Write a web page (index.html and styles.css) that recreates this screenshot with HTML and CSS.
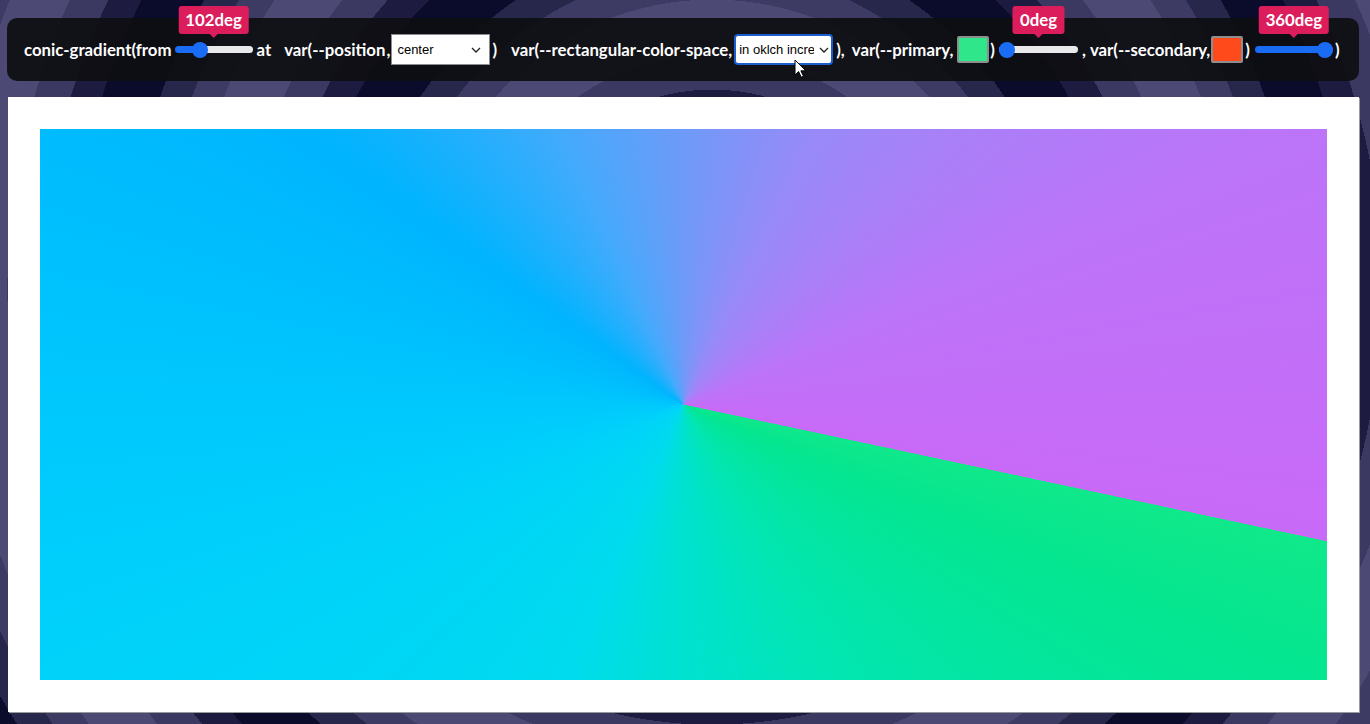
FILE: index.html
```html
<!DOCTYPE html>
<html lang="en">
<head>
<meta charset="utf-8">
<title>conic-gradient playground</title>
<link rel="stylesheet" href="styles.css">
</head>
<body>
<div class="page">
  <form class="toolbar">
    <span class="tok t-conic">conic-gradient(from</span>
    <span class="range-wrap s-from">
      <span class="tip">102deg</span>
      <input class="range" type="range" min="0" max="360" value="102" style="--p:28.3%">
    </span>
    <span class="tok t-at">at</span>
    <span class="tok t-pos">var(--position<span class="comma">,</span></span>
    <span class="select-wrap sel-pos">
      <select class="select"><option>center</option></select>
      <svg class="chev" viewBox="0 0 10 6" width="10" height="6"><path d="M1 1l4 4 4-4" fill="none" stroke="#222" stroke-width="1.3"/></svg>
    </span>
    <span class="tok t-close1">)</span>
    <span class="tok t-space">var(--rectangular-color-space,</span>
    <span class="select-wrap sel-space focused">
      <select class="select"><option>in oklch increasing hue</option></select>
      <svg class="chev" viewBox="0 0 10 6" width="10" height="6"><path d="M1 1l4 4 4-4" fill="none" stroke="#222" stroke-width="1.3"/></svg>
      <svg class="cursor" viewBox="0 0 12 19" width="12" height="19"><path d="M1 1v15l3.6-3.4 2.6 5.6 2.3-1-2.6-5.4h5z" fill="#fff" stroke="#000" stroke-width="1" stroke-linejoin="round"/></svg>
    </span>
    <span class="tok t-close2">),</span>
    <span class="tok t-primary">var(--primary,</span>
    <span class="swatch sw-green"></span>
    <span class="tok t-close3">)</span>
    <span class="range-wrap s-primary">
      <span class="tip">0deg</span>
      <input class="range" type="range" min="0" max="360" value="0" style="--p:0%">
    </span>
    <span class="tok t-comma">,</span>
    <span class="tok t-secondary">var(--secondary,</span>
    <span class="swatch sw-orange"></span>
    <span class="tok t-close4">)</span>
    <span class="range-wrap s-secondary">
      <span class="tip">360deg</span>
      <input class="range" type="range" min="0" max="360" value="360" style="--p:100%">
    </span>
    <span class="tok t-close5">)</span>
  </form>
  <main class="panel">
    <div class="preview"></div>
  </main>
</div>
</body>
</html>
```
FILE: styles.css
```css
* { box-sizing: border-box; }

html, body {
  margin: 0;
  height: 100%;
}

body {
  background-color: #0a0a28;
  background-image: repeating-radial-gradient(circle at 52% 40%,
    #4c4a74 0 55px,
    #3d3b63 55px 85px,
    #27264b 85px 115px,
    #0b0b2b 115px 170px,
    #1d1c40 170px 200px,
    #3b3961 200px 235px);
  font-family: "Lato", "Noto Sans", sans-serif;
  overflow: hidden;
}

.page {
  display: flex;
  flex-direction: column;
  padding: 18px 11px 0 8px;
  gap: 16px;
}

.toolbar {
  margin: 0 0 0 -1px;
  height: 63px;
  display: flex;
  align-items: center;
  padding: 0 0 0 17px;
  background: rgba(14, 14, 18, 0.93);
  border-radius: 10px;
  color: #fff;
  font-weight: 700;
  font-size: 16.8px;
  white-space: nowrap;
}

.tok { display: inline-block; line-height: 20px; }
.comma { margin-left: 1px; }

.t-at { margin-left: 4px; }
.t-pos { margin-left: 13px; }
.t-close1 { margin-left: 2px; }
.t-space { margin-left: 14px; }
.t-close2 { margin-left: 3px; }
.t-primary { margin-left: 7px; }
.t-close3 { margin-left: 1px; }
.t-comma { margin-left: 4px; }
.t-secondary { margin-left: 4px; }
.t-close4 { margin-left: 2px; }
.t-close5 { margin-left: 2px; }

/* range sliders */
.range-wrap {
  position: relative;
  display: inline-flex;
  align-items: center;
  width: 78px;
  height: 20px;
}
.s-from { margin-left: 3px; }
.s-primary { margin-left: 4px; width: 79px; }
.s-secondary { margin-left: 5px; }

.range {
  -webkit-appearance: none;
  appearance: none;
  margin: 0;
  width: 100%;
  height: 7px;
  border-radius: 4px;
  background: linear-gradient(to right, #1a6cf4 var(--p), #e9e9ec var(--p));
  outline: none;
}
.range::-webkit-slider-thumb {
  -webkit-appearance: none;
  appearance: none;
  width: 16px;
  height: 16px;
  border-radius: 50%;
  background: #1a6cf4;
  border: none;
}

.tip {
  position: absolute;
  left: 50%;
  bottom: 26px;
  transform: translateX(-50%);
  background: #dc1d5b;
  color: #fff;
  font-size: 16.8px;
  font-weight: 700;
  line-height: 28px;
  padding: 0 7px;
  border-radius: 3px;
}
.tip::after {
  content: "";
  position: absolute;
  left: 50%;
  top: 100%;
  margin-left: -4px;
  border: 4px solid transparent;
  border-top-color: #dc1d5b;
}

/* selects */
.select-wrap {
  position: relative;
  display: inline-block;
  width: 99px;
  height: 31px;
  margin-left: 1px;
}
.sel-space { margin-left: 2px; }
.select {
  -webkit-appearance: none;
  appearance: none;
  width: 100%;
  height: 100%;
  margin: 0;
  padding: 0 20px 0 5px;
  border: 1px solid #8d8d8d;
  border-radius: 0;
  background: #fff;
  color: #000;
  font-family: "Liberation Sans", Arial, sans-serif;
  font-size: 13px;
  outline: none;
}
.focused .select {
  border: 2px solid #1a5ecf;
  border-radius: 4px;
  padding-left: 3px;
  padding-right: 17px;
}
.chev {
  position: absolute;
  right: 9px;
  top: 13px;
  pointer-events: none;
}
.focused .chev { right: 4px; }
.cursor {
  position: absolute;
  left: 60px;
  top: 25px;
}

/* colour swatches */
.swatch {
  display: inline-block;
  width: 32px;
  height: 27px;
  margin-left: 2px;
  border: 2px solid #8e8e8e;
  border-radius: 2px;
}
.sw-green { background: #2fe68b; margin-left: 4px; }
.sw-orange { background: #ff4a1c; margin-left: 1px; }

/* preview panel */
.panel {
  background: #fff;
  padding: 32px;
  box-shadow: 1px 1px 0 #9a9a9a;
}
.preview {
  height: 551px;
  background: conic-gradient(from 102deg at 50% 50%,
    #10e88a 0deg,
    #04e690 11deg,
    #02e6b4 50deg,
    #00e2d0 78deg,
    #00dbee 102deg,
    #00d2fa 145deg,
    #00c8fd 168deg,
    #00b4fe 204deg,
    #44aafc 234deg,
    #6e9af8 258deg,
    #988af8 284deg,
    #bc74f8 325deg,
    #c86af8 360deg);
}
```
